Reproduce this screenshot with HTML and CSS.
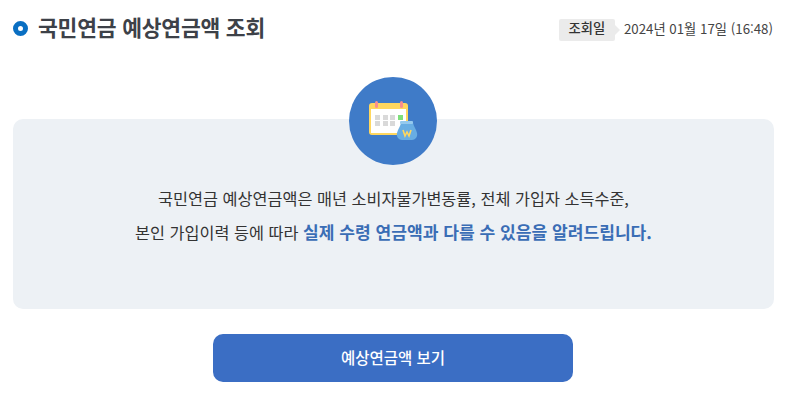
FILE: index.html
```html
<!DOCTYPE html>
<html lang="ko">
<head>
<meta charset="UTF-8">
<meta name="viewport" content="width=device-width, initial-scale=1.0">
<title>국민연금 예상연금액 조회</title>
<link rel="stylesheet" href="styles.css">
</head>
<body>
<!-- 제목 -->
<div class="head">
 <h1 class="title"><span class="bullet"></span>국민연금 예상연금액 조회</h1>
 <div class="date-box">
  <span class="date-label">조회일</span>
  <span class="date-value">2024년 01월 17일 (16:48)</span>
 </div>
</div>
<!-- 안내 -->
<div class="notice">
 <div class="notice-icon">
  <svg width="50" height="44" viewBox="0 0 50 44">
   <rect x="1" y="4" width="39" height="32" rx="3" fill="#ffd75e"/>
   <rect x="3" y="10" width="35" height="24" fill="#fff"/>
   <rect x="7" y="2" width="3" height="7" rx="1.5" fill="#f98f8f"/>
   <rect x="32" y="2" width="3" height="7" rx="1.5" fill="#f98f8f"/>
   <rect x="7" y="16" width="5" height="5" fill="#d9d9d9"/>
   <rect x="15" y="16" width="5" height="5" fill="#d9d9d9"/>
   <rect x="22" y="16" width="5" height="5" fill="#d9d9d9"/>
   <rect x="30" y="16" width="5" height="5" fill="#7ee07a"/>
   <rect x="7" y="22" width="5" height="5" fill="#d9d9d9"/>
   <rect x="15" y="22" width="5" height="5" fill="#d9d9d9"/>
   <rect x="22" y="22" width="5" height="5" fill="#d9d9d9"/>
   <path d="M33 24 C32 28 30 30 29 34 C28 38 31 41 34 41 L44 41 C47 41 50 38 49 34 C48 30 46 28 45 24 Z" fill="#68ade3"/>
   <rect x="32" y="22" width="13" height="3" rx="1" fill="#94c9ee"/>
   <path d="M35 31 L37 37 L39 33 L41 37 L43 31" fill="none" stroke="#ffd75e" stroke-width="1.6"/>
  </svg>
 </div>
 <p class="notice-line">국민연금 예상연금액은 매년 소비자물가변동률, 전체 가입자 소득수준,</p>
 <p class="notice-line">본인 가입이력 등에 따라 <strong class="point">실제 수령 연금액과 다를 수 있음을 알려드립니다.</strong></p>
</div>
<div class="btn-wrap">
 <button class="btn-view">예상연금액 보기</button>
</div>
</body>
</html>
```

FILE: styles.css
```css
body {
 margin: 0;
 font-family: "Noto Sans CJK KR", "Noto Sans", sans-serif;
 color: #333;
 background-color: #fff;
}
.head {
 display: flex;
 justify-content: space-between;
 align-items: center;
 height: 56px;
 padding: 0 14px 0 13px;
}
.title {
 display: flex;
 align-items: center;
 margin: 0 0 3px;
 font-size: 21.5px;
 font-weight: 700;
 letter-spacing: -0.2px;
 color: #3d4148;
}
.bullet {
 width: 5px;
 height: 5px;
 margin: 3px 10px 0 0;
 border: 5px solid #0a6fc2;
 border-radius: 50%;
}
.date-box {
 display: flex;
 align-items: center;
 margin-top: 4px;
 font-size: 13.3px;
}
.date-label {
 position: relative;
 width: 56px;
 height: 22px;
 line-height: 18px;
 text-align: center;
 font-weight: 500;
 background-color: #ebebeb;
 border-radius: 2px;
}
.date-label::after {
 content: "";
 position: absolute;
 left: 56px;
 top: 6px;
 border-left: 5px solid #ebebeb;
 border-top: 5px solid transparent;
 border-bottom: 5px solid transparent;
}
.date-value {
 margin: 0 0 4px 9px;
 color: #444;
}
.notice {
 position: relative;
 height: 190px;
 margin: 63px 13px 0;
 box-sizing: border-box;
 padding-top: 63px;
 background-color: #edf1f5;
 border-radius: 10px;
 text-align: center;
}
.notice-icon {
 position: absolute;
 left: 336px;
 top: -42px;
 display: flex;
 justify-content: center;
 align-items: center;
 width: 88px;
 height: 88px;
 background-color: #3f7bc8;
 border-radius: 50%;
}
.notice-line {
 margin: 0;
 height: 33px;
 line-height: 33px;
 font-size: 16.3px;
 color: #333;
}
.point {
 font-size: 17.1px;
 font-weight: 700;
 color: #3a6db5;
}
.btn-wrap {
 display: flex;
 justify-content: center;
 margin-top: 25px;
 padding-right: 1px;
}
.btn-view {
 width: 360px;
 height: 48px;
 padding-bottom: 4px;
 font-family: inherit;
 font-size: 15.5px;
 font-weight: 500;
 color: #fff;
 background-color: #3b6ec4;
 border: none;
 border-radius: 10px;
 cursor: pointer;
}
```
